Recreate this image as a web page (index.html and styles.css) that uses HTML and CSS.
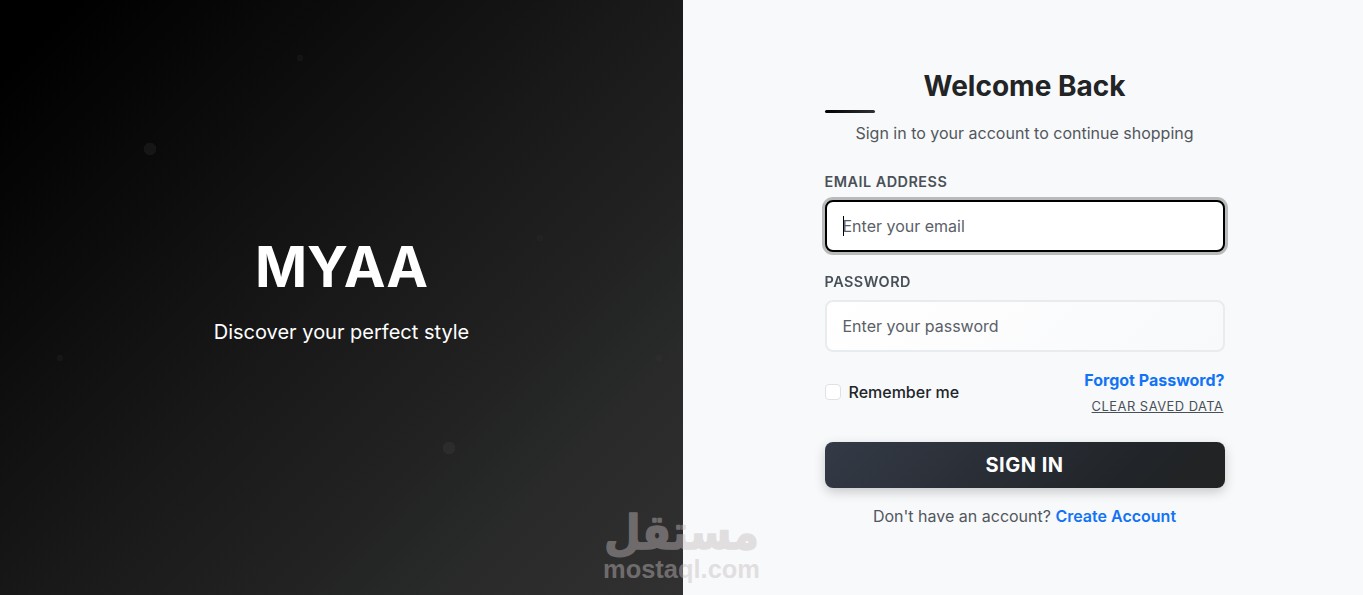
FILE: index.html
```
<!DOCTYPE html>
<html lang="en">
<head>
  <meta charset="UTF-8" />
  <meta name="viewport" content="width=device-width, initial-scale=1.0" />
  <title>MYAA - Sign In</title>
  <link rel="stylesheet" href="styles.css">
</head>
<body>
  <div class="login-page">
    <section class="brand-panel">
      <h1 class="brand-name">MYAA</h1>
      <p class="brand-tagline">Discover your perfect style</p>
    </section>

    <main class="form-panel">
      <div class="form-box">
        <h2 class="form-title">Welcome Back</h2>
        <p class="form-subtitle">Sign in to your account to continue shopping</p>

        <form>
          <div class="form-group">
            <label for="email">Email Address</label>
            <input type="email" id="email" class="form-control" placeholder="Enter your email" autofocus />
            <span class="caret"></span>
          </div>
          <div class="form-group">
            <label for="password">Password</label>
            <input type="password" id="password" class="form-control" placeholder="Enter your password" />
          </div>

          <div class="form-options">
            <label class="remember">
              <input type="checkbox" />
              Remember me
            </label>
            <div class="option-links">
              <a href="#" class="link forgot-link">Forgot Password?</a>
              <a href="#" class="clear-link">Clear Saved Data</a>
            </div>
          </div>

          <button type="submit" class="btn-signin">Sign In</button>
        </form>

        <p class="signup">Don't have an account? <a href="#" class="link">Create Account</a></p>
      </div>
    </main>
  </div>

  <svg class="watermark" width="160" height="80" viewBox="0 0 160 80">
    <text class="wm-arabic" x="2" y="41" textLength="155" lengthAdjust="spacingAndGlyphs">مستقل</text>
    <text class="wm-latin" x="1" y="70" textLength="157" lengthAdjust="spacingAndGlyphs">mostaql.com</text>
  </svg>
</body>
</html>
```
FILE: styles.css
```
* {
  box-sizing: border-box;
  margin: 0;
  padding: 0;
}
body {
  font-family: Inter, 'Liberation Sans', sans-serif;
  font-size: 16px;
  line-height: 1.6;
  color: #212529;
  background: #f8f9fa;
  overflow: hidden;
}
.login-page {
  display: grid;
  grid-template-columns: 683px 683px;
  height: 100vh;
}

/* left side */
.brand-panel {
  display: flex;
  flex-direction: column;
  align-items: center;
  justify-content: center;
  padding-bottom: 15px;
  color: #fff;
  background:
    radial-gradient(circle at 150px 149px, rgba(255,255,255,0.05) 6px, transparent 6.5px),
    radial-gradient(circle at 449px 448px, rgba(255,255,255,0.04) 6px, transparent 6.5px),
    radial-gradient(circle at 300px 58px, rgba(255,255,255,0.03) 3px, transparent 3.5px),
    radial-gradient(circle at 60px 358px, rgba(255,255,255,0.03) 3px, transparent 3.5px),
    radial-gradient(circle at 540px 238px, rgba(255,255,255,0.015) 3px, transparent 3.5px),
    radial-gradient(circle at 659px 358px, rgba(255,255,255,0.015) 3px, transparent 3.5px),
    linear-gradient(135deg, #000 6%, #191919 50%, #232323 70%, #252827 76%, #2a2a2a 82%, #313131 100%);
}
.brand-name {
  font-size: 56px;
  font-weight: 700;
  line-height: 68px;
  margin-bottom: 15px;
}
.brand-tagline {
  font-size: 20px;
  line-height: 32px;
}

/* right side */
.form-panel {
  display: flex;
  justify-content: center;
  padding-top: 64px;
  background: #f8f9fb;
}
.form-box {
  width: 400px;
}
.form-title {
  position: relative;
  font-size: 28px;
  font-weight: 700;
  line-height: 45px;
  text-align: center;
  color: #222426;
  margin-bottom: 11px;
}
.form-title::after {
  content: '';
  position: absolute;
  left: 0;
  bottom: -4px;
  width: 50px;
  height: 3px;
  border-radius: 2px;
  background: linear-gradient(135deg, #000, #333);
}
.form-subtitle {
  text-align: center;
  line-height: 26px;
  color: #52575c;
  margin-bottom: 25px;
}
.form-group {
  position: relative;
  margin-bottom: 19px;
}
.form-group:nth-child(2) {
  margin-bottom: 15px;
}
.form-group label {
  display: block;
  font-size: 14.4px;
  font-weight: 600;
  line-height: 22px;
  letter-spacing: 0.5px;
  text-transform: uppercase;
  color: #495057;
  margin-bottom: 7px;
}
.form-control {
  display: block;
  width: 100%;
  height: 52px;
  padding: 0 16px;
  font: inherit;
  border: 2px solid #e9ecef;
  border-radius: 8px;
  background: linear-gradient(135deg, #fff, #f8f9fb);
  outline: none;
}
.form-control::placeholder {
  color: #5a6067;
}
.form-control:focus {
  border-color: #000;
  background: #fff;
  box-shadow: 0 0 0 3px #b9bbbb;
  caret-color: transparent;
}
.caret {
  position: absolute;
  left: 18px;
  bottom: 16px;
  width: 1px;
  height: 20px;
  background: #000;
}
.form-options {
  display: flex;
  justify-content: space-between;
  align-items: center;
  margin-bottom: 23px;
}
.remember {
  display: flex;
  align-items: center;
  gap: 8px;
  font-weight: 500;
}
.remember input {
  appearance: none;
  width: 16px;
  height: 16px;
  margin-bottom: 2px;
  border: 1px solid #dee2e6;
  border-radius: 4px;
  background: #fff;
}
.option-links {
  display: flex;
  flex-direction: column;
  align-items: flex-end;
}
.link {
  font-weight: 600;
  color: #1273f5;
  text-decoration: none;
}
.forgot-link {
  font-weight: 700;
  line-height: 27px;
}
.clear-link {
  font-size: 12.9px;
  letter-spacing: 0.5px;
  line-height: 25px;
  text-transform: uppercase;
  color: #495057;
  margin-right: 1px;
}
.btn-signin {
  display: block;
  width: 100%;
  height: 46px;
  font: inherit;
  font-size: 20px;
  font-weight: 700;
  letter-spacing: 0.5px;
  text-transform: uppercase;
  color: #fff;
  border: none;
  border-radius: 8px;
  background: linear-gradient(135deg, #343a46, #212529 75%, #222);
  box-shadow: 0 4px 12px rgba(0,0,0,0.2);
}
.signup {
  margin-top: 16px;
  text-align: center;
  color: #52575c;
}

.watermark {
  position: absolute;
  left: 602px;
  top: 508px;
  overflow: visible;
  fill: #c5bcbf;
  stroke: #c5bcbf;
  stroke-linejoin: round;
  opacity: 0.43;
}
.wm-arabic {
  font-family: 'DejaVu Sans', sans-serif;
  font-size: 48px;
  font-weight: 700;
  stroke-width: 1.5px;
}
.wm-latin {
  font-family: 'Liberation Sans', sans-serif;
  font-size: 25px;
  font-weight: 700;
  stroke-width: 0;
}
```
